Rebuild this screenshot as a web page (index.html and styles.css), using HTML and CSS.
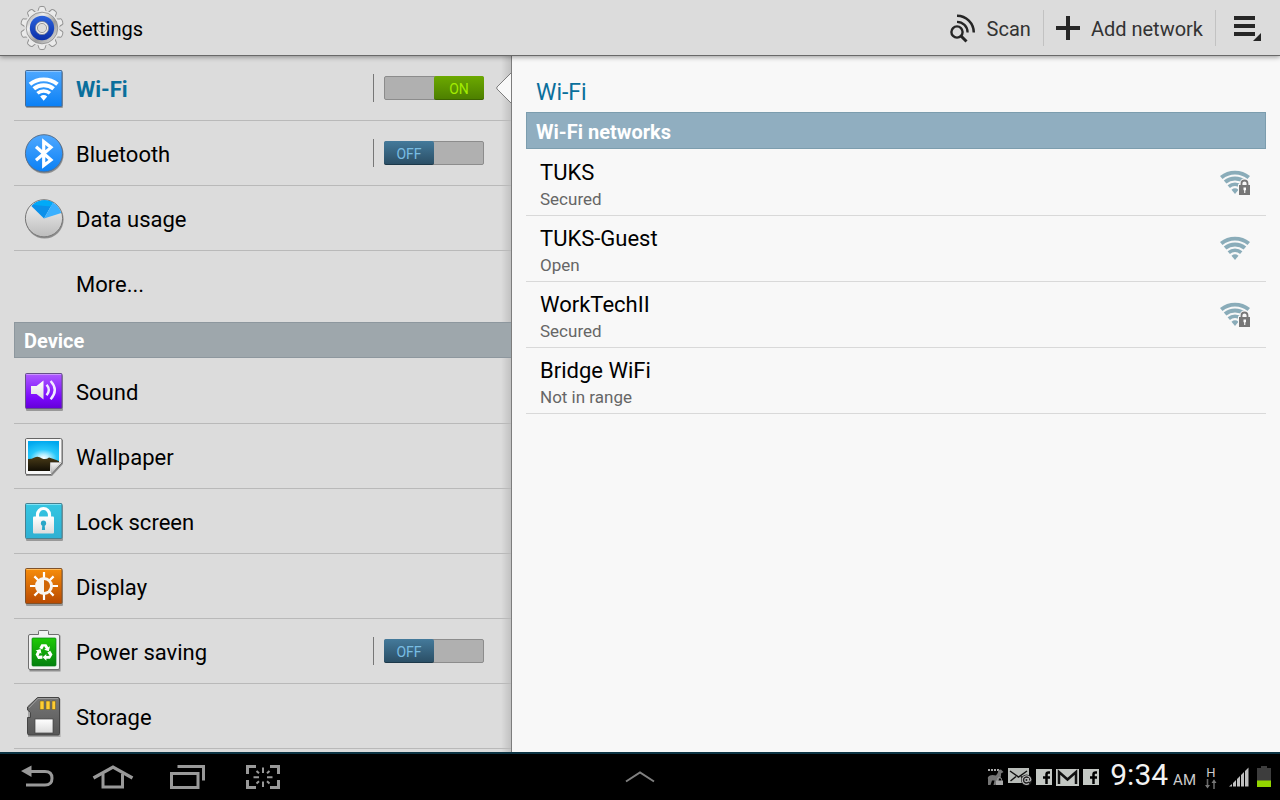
FILE: index.html
```html
<!DOCTYPE html>
<html lang="en">
<head>
<meta charset="utf-8">
<meta name="viewport" content="width=device-width, initial-scale=1">
<title>Settings</title>
<link rel="stylesheet" href="styles.css">
</head>
<body>
<svg class="defs" width="0" height="0" aria-hidden="true">
  <defs>
    <linearGradient id="blue" x1="0" y1="0" x2="0" y2="1"><stop offset="0" stop-color="#4fa8ff"/><stop offset="1" stop-color="#0a80f5"/></linearGradient>
    <linearGradient id="white" x1="0" y1="0" x2="0" y2="1"><stop offset="0" stop-color="#ffffff"/><stop offset="1" stop-color="#dcdcdc"/></linearGradient>
    <linearGradient id="silver" x1="0" y1="0" x2="0" y2="1"><stop offset="0" stop-color="#f4f4f4"/><stop offset="1" stop-color="#bcbcbc"/></linearGradient>
    <linearGradient id="purple" x1="0" y1="0" x2="0" y2="1"><stop offset="0" stop-color="#ae5cff"/><stop offset="0.7" stop-color="#7a08fb"/><stop offset="1" stop-color="#6400d8"/></linearGradient>
    <linearGradient id="cyan" x1="0" y1="0" x2="0" y2="1"><stop offset="0" stop-color="#35c6e2"/><stop offset="1" stop-color="#2fb0d3"/></linearGradient>
    <linearGradient id="orange" x1="0" y1="0" x2="0" y2="1"><stop offset="0" stop-color="#f78d0a"/><stop offset="1" stop-color="#b94a02"/></linearGradient>
    <linearGradient id="green" x1="0" y1="0" x2="0" y2="1"><stop offset="0" stop-color="#1fcb06"/><stop offset="1" stop-color="#04800f"/></linearGradient>
    <linearGradient id="card" x1="0" y1="0" x2="0" y2="1"><stop offset="0" stop-color="#767676"/><stop offset="1" stop-color="#575757"/></linearGradient>
    <radialGradient id="sky" cx="0.5" cy="0.85" r="0.85"><stop offset="0" stop-color="#ffffff"/><stop offset="0.2" stop-color="#b5efff"/><stop offset="0.5" stop-color="#29c8fb"/><stop offset="1" stop-color="#00a8ee"/></radialGradient>
    <linearGradient id="hill" x1="0" y1="0" x2="0" y2="1"><stop offset="0" stop-color="#4a3c18"/><stop offset="1" stop-color="#120e04"/></linearGradient>
    <linearGradient id="ring" x1="0" y1="0" x2="0" y2="1"><stop offset="0" stop-color="#2b62dc"/><stop offset="1" stop-color="#0a2fa8"/></linearGradient>
    <linearGradient id="steel" x1="0" y1="0" x2="1" y2="1"><stop offset="0" stop-color="#8f8f8f"/><stop offset="0.3" stop-color="#f0f0f0"/><stop offset="0.6" stop-color="#9a9a9a"/><stop offset="1" stop-color="#ececec"/></linearGradient>
    <g id="waves">
      <path d="M15 24 L11.5 19.8 A5.5 5.5 0 0 1 18.5 19.8Z"/>
      <path d="M7.6 15.2 A11.5 11.5 0 0 1 22.4 15.2 L20.1 17.9 A8 8 0 0 0 9.9 17.9Z"/>
      <path d="M3.8 10.6 A17.5 17.5 0 0 1 26.2 10.6 L23.6 13.6 A13.5 13.5 0 0 0 6.4 13.6Z"/>
      <path d="M0 6 A24 24 0 0 1 30 6 L27.5 9 A19.5 19.5 0 0 0 2.5 9Z"/>
    </g>
  </defs>
</svg>

<div class="screen">
  <header class="bar">
    <svg class="gear" width="44" height="46" viewBox="-22 -23 44 46" aria-hidden="true">
      <defs><path id="tooth" d="M-4.5 -16 Q-3.4 -18 -3 -20.5 Q-2.8 -21.5 0 -21.6 Q2.8 -21.5 3 -20.5 Q3.4 -18 4.5 -16Z"/></defs>
      <g fill="#ebebeb" stroke="#929292" stroke-width="1">
        <use href="#tooth"/><use href="#tooth" transform="rotate(36)"/><use href="#tooth" transform="rotate(72)"/><use href="#tooth" transform="rotate(108)"/><use href="#tooth" transform="rotate(144)"/><use href="#tooth" transform="rotate(180)"/><use href="#tooth" transform="rotate(216)"/><use href="#tooth" transform="rotate(252)"/><use href="#tooth" transform="rotate(288)"/><use href="#tooth" transform="rotate(324)"/>
      </g>
      <circle r="17.6" fill="#e9e9e9"/>
      <circle r="15.8" fill="url(#steel)" stroke="#8c8c8c" stroke-width="0.8"/>
      <circle r="12.2" fill="url(#ring)"/>
      <circle r="6.6" fill="#ededed" stroke="#7d8597" stroke-width="0.8"/>
      <circle r="4.6" fill="#dcdcdc" stroke="#9c9c9c" stroke-width="1"/>
    </svg>
    <h1 class="bar-title">Settings</h1>
    <div class="actions">
      <button class="action" type="button">
        <svg width="26" height="28" viewBox="0 1 26 28" fill="none" stroke="#262626" aria-hidden="true">
          <circle cx="7" cy="19" r="5.6" stroke-width="2.4"/>
          <path d="M11 23 L16.500 28.500" stroke-width="3"/>
          <path d="M7 8.800 A10.600 10.600 0 0 1 17.600 19.400" stroke-width="2.300"/>
          <path d="M7 2.700 A16.800 16.800 0 0 1 23.800 19.400" stroke-width="2.500"/>
        </svg>
        <span>Scan</span>
      </button>
      <button class="action" type="button">
        <svg width="24" height="24" viewBox="0 0 24 24" fill="#262626" aria-hidden="true"><path d="M10 0h4v10h10v4H14v10h-4V14H0v-4h10z"/></svg>
        <span>Add network</span>
      </button>
      <button class="action action-menu" type="button" aria-label="Menu">
        <svg width="28" height="26" viewBox="0 0 28 26" fill="#262626" aria-hidden="true"><path d="M0 1h21v4H0zM0 9h21v4H0zM0 17h21v4H0zM27 18v8h-8z"/></svg>
      </button>
    </div>
  </header>

  <div class="panes">
    <nav class="sidebar" aria-label="Settings">
      <ul class="menu">
        <li class="row row-active">
          <a class="row-link" href="#wifi">
            <svg width="40" height="40" viewBox="0 0 40 40" aria-hidden="true"><rect x="2" y="4" width="37" height="36" rx="1" fill="#000" opacity="0.3"/><rect x="1.5" y="2.5" width="36.5" height="36" rx="1" fill="url(#blue)" stroke="#496b91"/><path d="M2.5 3.5h34.5" stroke="#8bc5ff"/><use href="#waves" transform="translate(4.700 8.700)" fill="#fff"/></svg>
            <span id="l-wifi">Wi-Fi</span>
          </a>
          <label class="switch is-on"><input type="checkbox" checked aria-labelledby="l-wifi"><span class="thumb">ON</span></label>
          <svg class="pointer" width="16" height="34" viewBox="0 0 16 34" aria-hidden="true"><path d="M16 0 L15.5 1.5 L1 16 Q0.3 17 1 18 L15.5 32.5 L16 34Z" fill="#f8f8f8"/><path d="M15.5 0 V1.5 L1 16 Q0.3 17 1 18 L15.5 32.5 V34" fill="none" stroke="#7d7d7d"/></svg>
        </li>
        <li class="row">
          <a class="row-link" href="#bluetooth">
            <svg width="40" height="40" viewBox="0 0 40 40" aria-hidden="true"><circle cx="20.6" cy="21.6" r="19" fill="#000" opacity="0.35"/><circle cx="20" cy="20.3" r="18.6" fill="url(#blue)" stroke="#58708c"/><path d="M12 13.8 L27 27 L19.7 32.5 V8.5 L27 14.4 L12 27.2" fill="none" stroke="#fff" stroke-width="3.2"/></svg>
            <span id="l-bt">Bluetooth</span>
          </a>
          <label class="switch"><input type="checkbox" aria-labelledby="l-bt"><span class="thumb">OFF</span></label>
        </li>
        <li class="row">
          <a class="row-link" href="#data">
            <svg width="40" height="40" viewBox="0 0 40 40" aria-hidden="true"><circle cx="20.6" cy="21.6" r="19" fill="#000" opacity="0.35"/><circle cx="20" cy="20.3" r="18.6" fill="url(#silver)" stroke="#777"/><path d="M20 20.5 L7.3 8 A18 18 0 0 1 29 4.5Z" fill="#0b90ea"/><path d="M10 6 A18 18 0 0 1 29 4.5 L27 8.5 L10 7Z" fill="#00aaf8"/><path d="M20 20.5 L29 4.5 A18 18 0 0 1 37.3 15Z" fill="#3ab0ff"/></svg>
            <span>Data usage</span>
          </a>
        </li>
        <li class="row row-last"><a class="row-link row-plain" href="#more"><span>More...</span></a></li>
      </ul>

      <h2 class="group">Device</h2>
      <ul class="menu">
        <li class="row">
          <a class="row-link" href="#sound">
            <svg width="40" height="40" viewBox="0 0 40 40" aria-hidden="true"><rect x="2" y="4" width="37" height="36" rx="1" fill="#000" opacity="0.3"/><rect x="1.5" y="2.5" width="36.5" height="35" rx="1" fill="url(#purple)" stroke="#66508a"/><path d="M2.5 3.5h34.5" stroke="#ca92ff"/><path d="M7 15h5.5l7-5.5v19l-7-5.5H7z" fill="url(#white)"/><g fill="none" stroke="#f1eaff" stroke-width="2.4"><path d="M22.6 13.8 Q27 19 22.6 24.2"/><path d="M26.6 10 Q35 19 26.6 28.2"/></g></svg>
            <span>Sound</span>
          </a>
        </li>
        <li class="row">
          <a class="row-link" href="#wallpaper">
            <svg width="40" height="40" viewBox="0 0 40 40" aria-hidden="true"><path d="M2 4h37v24L28 40H2z" fill="#000" opacity="0.35"/><path d="M2.5 2.5h34q1.5 0 1.5 1.5v23L27 38.5H3Q1.5 38.5 1.5 37V4Q1.5 2.5 2.5 2.5Z" fill="#f7f7f7" stroke="#666"/><rect x="4" y="5" width="31" height="20" fill="url(#sky)"/><path d="M4 23 Q8 23 10.5 21.5 Q14 19.5 18 22.5 Q22 24 25 21.5 Q29 22.5 35 25 V27 H26 V35H4z" fill="url(#hill)"/><path d="M26.500 26.500H37L27 37z" fill="url(#silver)" stroke="#aaa" stroke-width="0.7"/></svg>
            <span>Wallpaper</span>
          </a>
        </li>
        <li class="row">
          <a class="row-link" href="#lock">
            <svg width="40" height="40" viewBox="0 0 40 40" aria-hidden="true"><rect x="2" y="4" width="37" height="36" rx="1" fill="#000" opacity="0.3"/><rect x="1.5" y="2.5" width="36.5" height="35" rx="1" fill="url(#cyan)" stroke="#48808f"/><path d="M2.5 3.5h34.5" stroke="#7fe2f5"/><path d="M13.5 17 V13.5 a6 6 0 0 1 12 0 V17" fill="none" stroke="#fff" stroke-width="3.2"/><rect x="9" y="15.6" width="21" height="17" rx="1" fill="url(#white)"/><circle cx="19.5" cy="22.2" r="2.6" fill="#2aa7c8"/><path d="M18.5 22h2l.6 7h-3.2z" fill="#2aa7c8"/></svg>
            <span>Lock screen</span>
          </a>
        </li>
        <li class="row">
          <a class="row-link" href="#display">
            <svg width="40" height="40" viewBox="0 0 40 40" aria-hidden="true"><rect x="2" y="4" width="37" height="36" rx="1" fill="#000" opacity="0.3"/><rect x="1.5" y="2.5" width="36.5" height="35" rx="1" fill="url(#orange)" stroke="#80522a"/><path d="M2.5 3.5h34.5" stroke="#ffba5a"/><g transform="translate(20 20)"><g stroke="#fff" stroke-width="2.2"><path d="M0 -14V-8M0 14V8M-14 0H-8M14 0H8M-9.6 -9.6L-5.5 -5.5M9.6 9.6L5.5 5.5M-9.6 9.6L-5.5 5.5M9.6 -9.6L5.5 -5.5"/></g><circle r="9" fill="#f7f4f0"/><path d="M0 -6a6 6 0 0 1 0 12z" fill="#d06505"/></g></svg>
            <span>Display</span>
          </a>
        </li>
        <li class="row">
          <a class="row-link" href="#power">
            <svg width="40" height="40" viewBox="0 0 40 40" aria-hidden="true"><path d="M5.5 4.5h31V40.5h-31z" fill="#000" opacity="0.35"/><path d="M6 3.5h8.5V.5q0-1 1-1h8q1 0 1 1v3H34q1.5 0 1.5 1.5v32q0 1.5-1.5 1.5H6q-1.5 0-1.5-1.5V5q0-1.5 1.5-1.5z" fill="#f3f3f3" stroke="#6f6f6f"/><rect x="8" y="7" width="24" height="28" rx="1" fill="url(#green)" stroke="#078015" stroke-width="0.7"/><g fill="#fff" transform="translate(20 21.5)"><g id="arm"><path d="M-4.7 -4.5 L-2.6 -8.3 H2.4 L4.3 -5.3 L6 -6.2 L4.8 -1.2 L.2 -2.8 L1.8 -3.7 L0 -6.4 L-1.8 -2.9z"/></g><use href="#arm" transform="rotate(120)"/><use href="#arm" transform="rotate(240)"/></g></svg>
            <span id="l-power">Power saving</span>
          </a>
          <label class="switch"><input type="checkbox" aria-labelledby="l-power"><span class="thumb">OFF</span></label>
        </li>
        <li class="row">
          <a class="row-link" href="#storage">
            <svg width="40" height="40" viewBox="0 0 40 40" aria-hidden="true"><path d="M4 12L14 3h22.5v38H4z" fill="#000" opacity="0.25"/><path d="M13.5 1.5H34q1.5 0 1.5 1.5v34.5q0 1.5-1.5 1.5H5.5Q3.5 39 3.5 37.5V21.5H6.5V16.5L3.5 14V11z" fill="url(#card)" stroke="#444"/><path d="M5 12L14 2.5H34" fill="none" stroke="#9b9b9b"/><path d="M16 5h4v8.5h-4zM22 5h4v8.5h-4zM28 5h3.5v8.5H28z" fill="#ffcd33" stroke="#6a571b" stroke-width="0.5"/><rect x="11" y="23" width="18" height="14" fill="url(#white)" stroke="#444" stroke-width="0.7"/></svg>
            <span>Storage</span>
          </a>
        </li>
      </ul>
    </nav>

    <main class="content" id="wifi">
      <h2 class="title">Wi-Fi</h2>
      <h3 class="section">Wi-Fi networks</h3>
      <ul class="networks">
        <li><a class="network" href="#tuks"><span class="info"><span class="name">TUKS</span><span class="state">Secured</span></span>
          <svg width="32" height="30" viewBox="0 0 32 30" aria-hidden="true"><use href="#waves" transform="translate(0 2)" fill="#8aacb9"/><path d="M18 29V16.5L20 15Q20 10.5 24.5 10.5Q29 10.5 29 15L32 16V29z" fill="#f8f8f8"/><path d="M21.5 17V15.5a3 3 0 0 1 6 0V17" fill="none" stroke="#777" stroke-width="1.8"/><path d="M19 17h11v10H19z" fill="#777"/><path d="M23.5 19.5h2.5v2.5l-.7.5v2.5h-1.1V22.5l-.7-.5z" fill="#fff"/></svg></a></li>
        <li><a class="network" href="#tuks-guest"><span class="info"><span class="name">TUKS-Guest</span><span class="state">Open</span></span>
          <svg width="32" height="30" viewBox="0 0 32 30" aria-hidden="true"><use href="#waves" transform="translate(0 2)" fill="#8aacb9"/></svg></a></li>
        <li><a class="network" href="#worktech"><span class="info"><span class="name">WorkTechII</span><span class="state">Secured</span></span>
          <svg width="32" height="30" viewBox="0 0 32 30" aria-hidden="true"><use href="#waves" transform="translate(0 2)" fill="#8aacb9"/><path d="M18 29V16.5L20 15Q20 10.5 24.5 10.5Q29 10.5 29 15L32 16V29z" fill="#f8f8f8"/><path d="M21.5 17V15.5a3 3 0 0 1 6 0V17" fill="none" stroke="#777" stroke-width="1.8"/><path d="M19 17h11v10H19z" fill="#777"/><path d="M23.5 19.5h2.5v2.5l-.7.5v2.5h-1.1V22.5l-.7-.5z" fill="#fff"/></svg></a></li>
        <li><a class="network" href="#bridge"><span class="info"><span class="name">Bridge WiFi</span><span class="state">Not in range</span></span></a></li>
      </ul>
    </main>
  </div>

  <footer class="system">
    <div class="keys">
      <button class="key" type="button" aria-label="Back"><svg width="34" height="24" viewBox="0 0 34 24" aria-hidden="true"><path d="M9 6.5H24Q31 6.5 31 13.2Q31 20 24 20H5" fill="none" stroke="#999" stroke-width="3"/><path d="M0 6L10.5 .5v11.5z" fill="#999"/></svg></button>
      <button class="key" type="button" aria-label="Home"><svg width="40" height="24" viewBox="0 0 40 24" fill="none" stroke="#999" stroke-width="3" aria-hidden="true"><path d="M.5 13L20 2L39.5 13" stroke-width="3.2"/><path d="M10 9V22H29.5V9"/></svg></button>
      <button class="key" type="button" aria-label="Recent apps"><svg width="36" height="24" viewBox="0 0 36 24" fill="none" stroke="#999" stroke-width="3" aria-hidden="true"><path d="M7.5 1.5H33.5V15.5"/><rect x="1.5" y="8.5" width="26.5" height="14"/></svg></button>
      <button class="key" type="button" aria-label="Capture screen"><svg width="34" height="24" viewBox="0 0 34 24" fill="none" stroke="#999" stroke-width="3" aria-hidden="true"><path d="M1.5 9V1.5H10M24 1.5H32.5V9M32.5 15V22.5H24M10 22.5H1.5V15"/><path d="M17 2.5V8M17 16.5V22M7.5 12.3H13M21 12.3H26.5M10.5 6L13 8.3M23.5 6L21 8.3M10.5 18.6L13 16.3M23.5 18.6L21 16.3" stroke-width="2"/></svg></button>
    </div>
    <button class="expand" type="button" aria-label="Expand"><svg width="30" height="12" viewBox="0 0 30 12" aria-hidden="true"><path d="M1 10.5L15 1.5L29 10.5" fill="none" stroke="#808080" stroke-width="2"/></svg></button>
    <div class="status">
      <div class="notices">
        <svg width="17" height="18" viewBox="0 0 17 18" aria-hidden="true"><path d="M1 1h2v2H1zM4 1h2v2H4zM7 1h2v2H7zM10 1h2v2h-2z" fill="#aaa"/><path d="M1 17V11Q0 9 3 7.5Q5 6.5 9 7.5Q11 6 11.5 2L14 1.5L16.5 4L14 5.5Q14.5 9 12 11V12L8.5 17H6.5L7.5 12.5H5L3.5 17z" fill="#747474"/><path d="M10.5 12.5V11.5a2 2 0 0 1 4 0V12.5" fill="none" stroke="#999"/><path d="M9 12.5h7V17H9z" fill="#aaa"/></svg>
        <svg width="24" height="18" viewBox="0 0 24 18" aria-hidden="true"><path d="M0 0h21v15H0z" fill="#b9bdb9"/><path d="M2 3L10.5 9L19 3M2.5 13L8 8.5M13 8.5L16 11" fill="none" stroke="#111" stroke-width="1.5"/><circle cx="18.5" cy="12" r="5.5" fill="#222"/><circle cx="18.5" cy="12" r="1.7" fill="none" stroke="#bbb" stroke-width="1.2"/><path d="M20.3 10V12.7Q22.5 14 22.8 11.5A4.3 4.3 0 1 0 21 15.6" fill="none" stroke="#bbb" stroke-width="1.2"/></svg>
        <svg width="16" height="16" viewBox="0 0 16 16" aria-hidden="true"><path d="M0 0h16v16H0z" fill="#c4c8c4"/><path d="M14 3.5H12.5Q10.5 3.5 10.5 5.5V15M7 8.5H14" fill="none" stroke="#000" stroke-width="2.5"/></svg>
        <svg width="23" height="17" viewBox="0 0 23 17" aria-hidden="true"><path d="M0 0h23v17H0z" fill="#c4c8c4"/><path d="M3 15V3L11.5 10.5L20 3V15" fill="none" stroke="#111" stroke-width="2.5"/></svg>
        <svg width="16" height="16" viewBox="0 0 16 16" aria-hidden="true"><path d="M0 0h16v16H0z" fill="#c4c8c4"/><path d="M14 3.5H12.5Q10.5 3.5 10.5 5.5V15M7 8.5H14" fill="none" stroke="#000" stroke-width="2.5"/></svg>
      </div>
      <time class="clock" datetime="09:34"><span>9:34</span><small>AM</small></time>
      <div class="radio">
        <span class="net">H</span>
        <svg width="12" height="10" viewBox="0 0 12 10" aria-hidden="true"><path d="M2.5 0V8M9 10V2" stroke="#686868" stroke-width="1.6"/><path d="M0 6h5L2.5 9.5zM6.5 4h5L9 .3z" fill="#777"/></svg>
      </div>
      <svg width="20" height="20" viewBox="0 0 20 20" fill="#c0c0c0" aria-hidden="true"><path d="M0 19.5L3 17V19.5zM4 16l3-3v6.5H4zM8 12l3-3v10.5H8zM12 8l3-3v14.5h-3zM16 4l3.5-3.5v19H16z"/></svg>
      <svg width="14" height="22" viewBox="0 0 14 22" aria-hidden="true"><path d="M4 0h6v2h4v13H0V2h4z" fill="#3d3d3d"/><path d="M0 14.5h14V21H0z" fill="#93d500"/></svg>
    </div>
  </footer>
</div>
<script src="script.js"></script>
</body>
</html>
```

FILE: styles.css
```css
*, *::before { box-sizing: border-box; }

body {
  margin: 0;
  font-family: Roboto, "Noto Sans", sans-serif;
  color: #000;
  background: #f8f8f8;
}

h1, h2, h3, ul { margin: 0; padding: 0; font-weight: 400; }
ul { list-style: none; }
a { color: inherit; text-decoration: none; }
button { margin: 0; padding: 0; border: 0; background: none; color: inherit; font: inherit; }
svg { display: block; flex: none; overflow: visible; }
.defs { position: absolute; }

.screen {
  display: flex;
  flex-direction: column;
  height: 100vh;
  overflow: hidden;
}

/* Title bar */
.bar {
  display: flex;
  align-items: center;
  flex: none;
  height: 56px;
  padding-left: 20px;
  background: #dcdcdc;
  border-bottom: 1px solid #696969;
  box-shadow: 0 1px 5px rgba(0, 0, 0, 0.4);
  position: relative;
  z-index: 2;
}
.bar-title { flex: 1; padding: 2px 0 0 6px; font-size: 20px; line-height: 24px; }
.actions { display: flex; align-items: center; }
.action {
  display: flex;
  align-items: center;
  gap: 11px;
  height: 36px;
  padding: 0 12px;
  font-size: 20px;
  line-height: 24px;
  color: #333;
}
.action span { padding-top: 2px; }
.action + .action { border-left: 1px solid #c2c2c2; }
.action-menu { padding: 0 18px; }

/* Panes */
.panes { display: flex; flex: 1; min-height: 0; }
.sidebar {
  width: 40%;
  overflow: hidden;
  padding-left: 14px;
  background: linear-gradient(to left, rgba(0, 0, 0, 0.12), rgba(0, 0, 0, 0) 10px) #dcdcdc;
  border-right: 1px solid #7d7d7d;
}
.row {
  display: flex;
  align-items: center;
  height: 65px;
  border-bottom: 1px solid #b9b9b9;
  position: relative;
}
.row-last { border-bottom-color: transparent; margin-bottom: 6px; }
.row-link {
  display: flex;
  align-items: center;
  flex: 1;
  gap: 12px;
  height: 100%;
  padding-left: 10px;
  font-size: 22px;
  line-height: 26px;
}
.row-link span { padding-top: 4px; }
.row-plain { padding-left: 62px; }
.row-active .row-link { font-weight: 700; color: #0a6f9c; }
.pointer { position: absolute; right: -1px; top: 15px; }
.group, .section {
  height: 36px;
  padding-left: 9px;
  font-size: 20px;
  font-weight: 700;
  line-height: 36px;
  color: #fff;
}
.group { margin-bottom: 1px; background: #9ea7ac; border: 1px solid #8d979e; border-right: 0; }

/* Switches */
.switch {
  display: flex;
  align-items: center;
  height: 28px;
  margin-right: 27px;
  padding-left: 10px;
  border-left: 1px solid #777;
  position: relative;
}
.switch::before {
  content: "";
  width: 100px;
  height: 24px;
  background: #b0b0b0;
  border: 1px solid #8c8c8c;
  border-radius: 2px;
}
.switch input { position: absolute; inset: 0; margin: 0; opacity: 0; z-index: 1; }
.thumb {
  position: absolute;
  left: 10px;
  width: 50px;
  height: 24px;
  padding-top: 2px;
  border-radius: 2px;
  border-bottom: 1px solid #1c3849;
  background: linear-gradient(#447a9b, #2b4f66);
  color: #79bde3;
  font-size: 14px;
  line-height: 22px;
  text-align: center;
}
.is-on .thumb {
  left: 60px;
  border-bottom-color: #3c6400;
  background: linear-gradient(#6ca900, #4d8000);
  color: #a2ec00;
}

/* Network list */
.content { flex: 1; padding: 0 14px; background: #f8f8f8; }
.title { padding: 24px 0 6px 10px; font-size: 23px; line-height: 26px; color: #0a6f9c; }
.section { height: 37px; margin-bottom: 1px; background: #90aec0; border: 1px solid #7c9dae; line-height: 38px; }
.network {
  display: flex;
  align-items: center;
  justify-content: space-between;
  height: 66px;
  padding: 0 14px;
  border-bottom: 1px solid #d9d9d9;
}
.info { display: flex; flex-direction: column; padding-top: 4px; }
.name { font-size: 22px; line-height: 28px; }
.state { font-size: 17px; line-height: 24px; color: #666; }

/* System bar */
.system {
  display: grid;
  grid-template-columns: 1fr auto 1fr;
  grid-template-rows: 46px;
  align-items: center;
  flex: none;
  height: 48px;
  border-top: 2px solid #0c3444;
  background: #000;
}
.keys { display: flex; }
.key { display: grid; place-items: center; width: 75px; height: 46px; }
.expand { padding: 10px; }
.status { display: flex; align-items: center; justify-content: flex-end; gap: 8px; padding-right: 9px; }
.notices { display: flex; align-items: center; gap: 4px; margin-right: 3px; }
.clock { display: flex; align-items: baseline; gap: 5px; color: #f2f2f2; font-size: 30px; line-height: 36px; }
.clock small { font-size: 15px; color: #ccc; }
.radio { display: flex; flex-direction: column; align-items: center; margin: 0 4px 0 1px; }
.net { color: #ccc; font-size: 13px; line-height: 13px; }
```

FILE: script.js
```javascript
document.querySelectorAll(".switch input").forEach(function (input) {
  input.addEventListener("change", function () {
    input.parentElement.classList.toggle("is-on", input.checked);
    input.nextElementSibling.textContent = input.checked ? "ON" : "OFF";
  });
});
```
